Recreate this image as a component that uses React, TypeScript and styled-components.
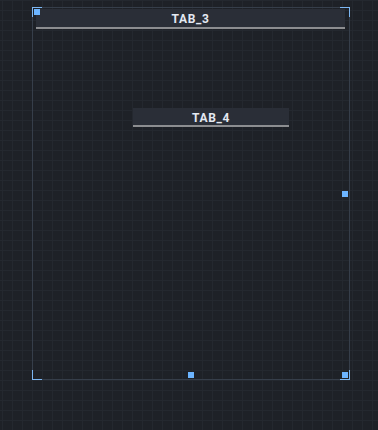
import React from "react";
import styled, { createGlobalStyle } from "styled-components";

const Global = createGlobalStyle`
  html, body { margin: 0; padding: 0; }
  body {
    width: 378px;
    height: 430px;
    overflow: hidden;
    background-color: #1e2127;
    background-image:
      linear-gradient(to right, #24282f 1px, transparent 1px),
      linear-gradient(to bottom, #24282f 1px, transparent 1px);
    background-size: 10px 10px;
    background-position: 2px 0;
    font-family: Roboto, "Liberation Sans", sans-serif;
  }
`;

const Canvas = styled.div`
  padding: 7px 0 0 32px;
`;

const Frame = styled.div`
  position: relative;
  box-sizing: border-box;
  width: 318px;
  height: 373px;
  border: 1px solid #363e4a;
  padding: 1px 0 0 3px;
`;

const Tab = styled.div<{ $w: number; $h: number }>`
  box-sizing: border-box;
  width: ${(p) => p.$w}px;
  height: ${(p) => p.$h}px;
  padding-top: 2px;
  background: #2a2e37;
  border-bottom: 2px solid #8c8d90;
  display: flex;
  align-items: center;
  justify-content: center;
  color: #e4e9f2;
  font-size: 12px;
  font-weight: 700;
  letter-spacing: 0.6px;
  line-height: 1;
`;

const FloatingTab = styled(Tab)`
  position: absolute;
  left: 100px;
  top: 100px;
`;

const Handle = styled.div<{ $x: string; $y: string }>`
  position: absolute;
  width: 6px;
  height: 6px;
  background: #6cb4ff;
  left: ${(p) => p.$x};
  top: ${(p) => p.$y};
`;

const Corner = styled.div<{ $pos: "tl" | "tr" | "bl" | "br" }>`
  position: absolute;
  width: 10px;
  height: 10px;
  box-sizing: border-box;
  border-color: #7cb6f2;
  border-style: solid;
  border-width: 0;
  ${(p) => (p.$pos[0] === "t" ? "top: -1px; border-top-width: 1px;" : "bottom: -1px; border-bottom-width: 1px;")}
  ${(p) => (p.$pos[1] === "l" ? "left: -1px; border-left-width: 1px;" : "right: -1px; border-right-width: 1px;")}
`;

export default function App() {
  return (
    <>
      <Global />
      <Canvas>
        <Frame>
          <Tab $w={309} $h={20}>TAB_3</Tab>
          <FloatingTab $w={156} $h={19}>TAB_4</FloatingTab>
          <Corner $pos="tl" />
          <Corner $pos="tr" />
          <Corner $pos="bl" />
          <Corner $pos="br" />
          <Handle $x="1px" $y="1px" />
          <Handle $x="309px" $y="183px" />
          <Handle $x="155px" $y="364px" />
          <Handle $x="309px" $y="364px" />
        </Frame>
      </Canvas>
    </>
  );
}
